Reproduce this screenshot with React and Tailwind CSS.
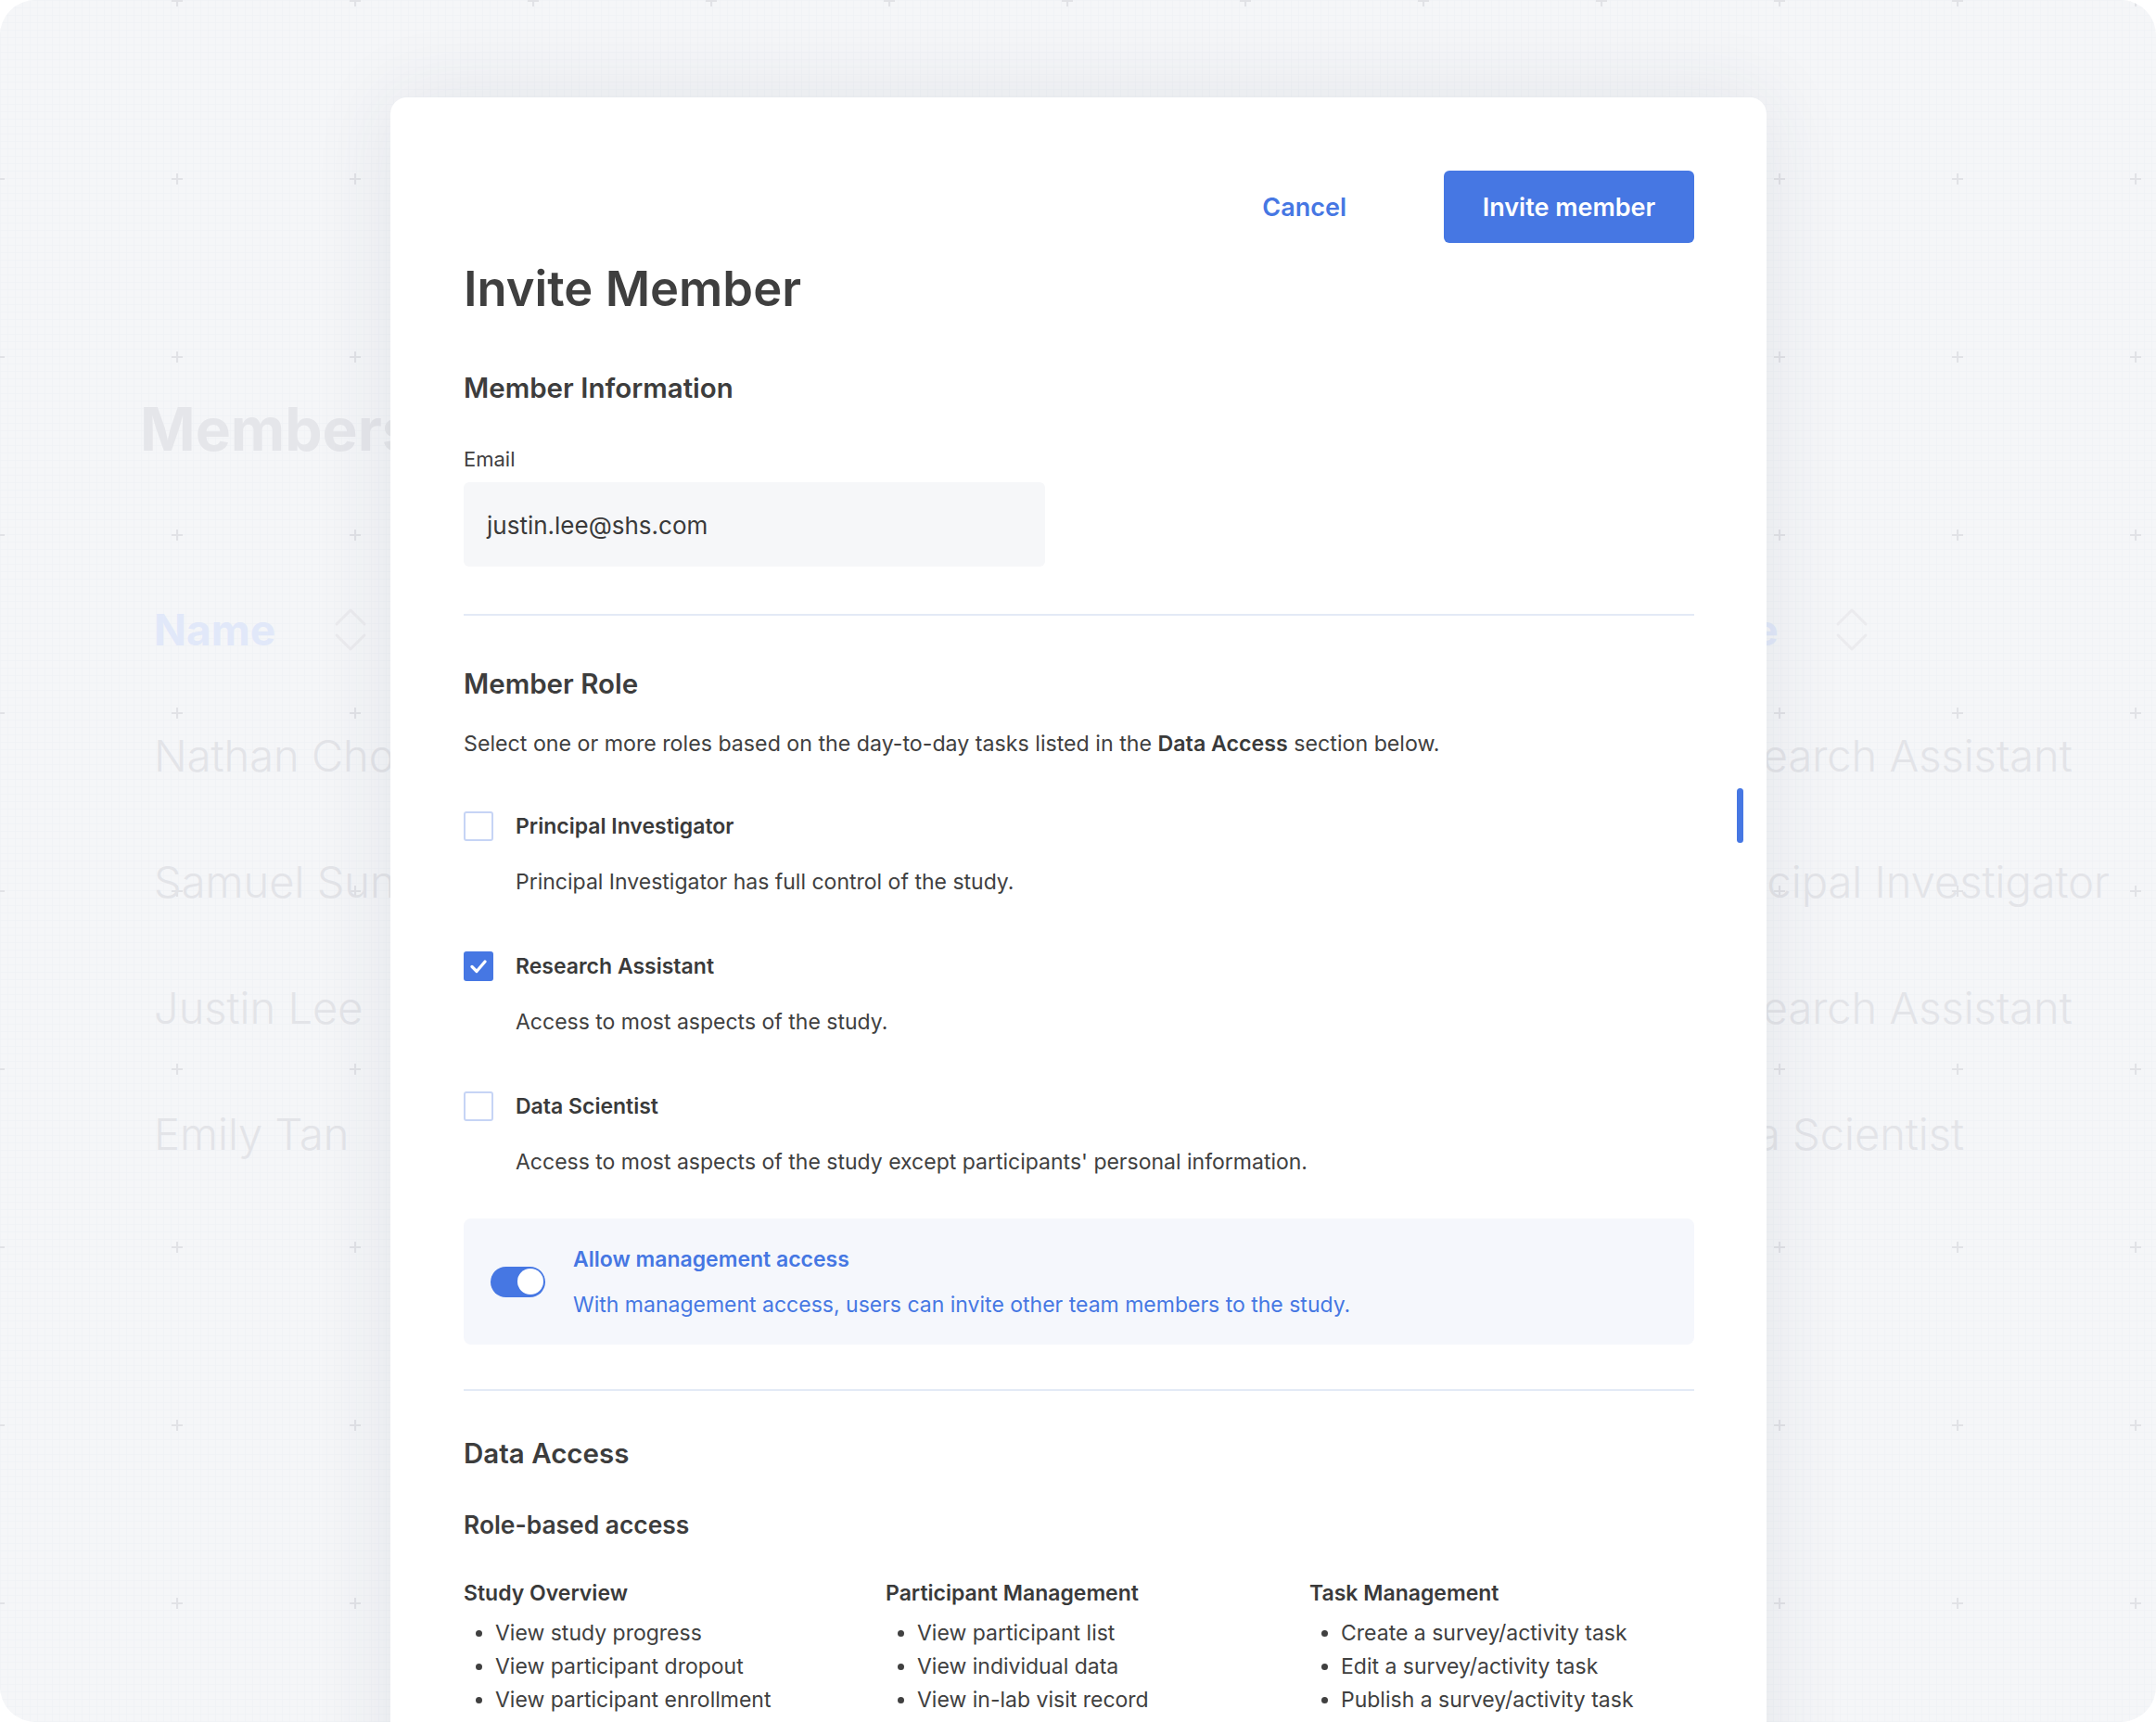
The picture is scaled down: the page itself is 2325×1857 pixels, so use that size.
import React from "react";

const roles = [
  {
    name: "Principal Investigator",
    desc: "Principal Investigator has full control of the study.",
    checked: false
  },
  {
    name: "Research Assistant",
    desc: "Access to most aspects of the study.",
    checked: true
  },
  {
    name: "Data Scientist",
    desc: "Access to most aspects of the study except participants' personal information.",
    checked: false
  }
];

const access = [
  {
    title: "Study Overview",
    items: ["View study progress", "View participant dropout", "View participant enrollment"]
  },
  {
    title: "Participant Management",
    items: ["View participant list", "View individual data", "View in-lab visit record"]
  },
  {
    title: "Task Management",
    items: ["Create a survey/activity task", "Edit a survey/activity task", "Publish a survey/activity task"]
  }
];

const members = [
  ["Nathan Cho", "Research Assistant"],
  ["Samuel Sung", "Principal Investigator"],
  ["Justin Lee", "Research Assistant"],
  ["Emily Tan", "Data Scientist"]
];

function BgGrid() {
  return (
    <svg className="absolute inset-0 w-full h-full" xmlns="http://www.w3.org/2000/svg">
      <defs>
        <pattern id="fine" width="8" height="8" patternUnits="userSpaceOnUse">
          <path d="M8 0H0V8" fill="none" stroke="#eef0f3" strokeWidth="1" />
        </pattern>
        <pattern id="plus" x="-97" y="-95" width="192" height="192" patternUnits="userSpaceOnUse">
          <path d="M90 96H102M96 90V102" stroke="#e1e2e6" strokeWidth="2" />
        </pattern>
      </defs>
      <rect width="100%" height="100%" fill="url(#fine)" />
      <rect width="100%" height="100%" fill="url(#plus)" />
    </svg>
  );
}

function SortIcon() {
  return (
    <svg width="38" height="60" viewBox="0 0 38 60" fill="none">
      <path d="M4 24L19 9L34 24" stroke="#ebebee" strokeWidth="3" strokeLinecap="round" strokeLinejoin="round" />
      <path d="M4 36L19 51L34 36" stroke="#ebebee" strokeWidth="3" strokeLinecap="round" strokeLinejoin="round" />
    </svg>
  );
}

function Checkbox({ checked }) {
  if (checked) {
    return (
      <div className="w-[32px] h-[32px] rounded-[3px] bg-[#4677e3] flex items-center justify-center">
        <svg width="22" height="22" viewBox="0 0 22 22" fill="none">
          <path d="M4 11.5L9 16.5L18 6" stroke="white" strokeWidth="3.2" strokeLinecap="round" strokeLinejoin="round" />
        </svg>
      </div>
    );
  }
  return <div className="w-[32px] h-[32px] rounded-[3px] border-2 border-[#c6d4f5] bg-white" />;
}

export default function App() {
  return (
    <div className="w-[2325px] h-[1857px] bg-white relative overflow-hidden font-['Inter',sans-serif]">
      <div className="relative w-full h-full rounded-[38px] bg-[#f5f6f8] overflow-hidden">
        <BgGrid />

        {/* page behind the dialog */}
        <div className="relative pl-[151px] pt-[431px]">
          <h1 className="text-[64px] leading-[64px] font-bold text-[#e5e6ea]">Members</h1>

          <div className="mt-[116px] pl-[15px]">
            <div className="flex h-[136px] items-center">
              <div className="w-[1654px] flex items-center">
                <span className="text-[46px] font-bold text-[#e1e8f9]">Name</span>
                <span className="ml-[62px]"><SortIcon /></span>
              </div>
              <div className="flex items-center">
                <span className="text-[46px] font-bold text-[#e1e8f9]">Role</span>
                <span className="ml-[60px]"><SortIcon /></span>
              </div>
            </div>
            {members.map((m, i) => (
              <div key={i} className="flex h-[136px] items-center text-[47px] font-light text-[#e3e4e8]">
                <div className="w-[1654px]">{m[0]}</div>
                <div>{m[1]}</div>
              </div>
            ))}
          </div>
        </div>

        {/* dialog */}
        <div className="absolute left-[421px] top-[105px] w-[1484px] h-[1900px] bg-white rounded-[18px] shadow-[0_0_90px_rgba(40,50,90,0.09)]">
          <div className="absolute right-[25px] top-[745px] w-[7px] h-[59px] rounded-full bg-[#4677e3]" />

          <div className="pl-[79px] pr-[78px] pt-[79px] text-[#3d3d3d]">
            <div className="flex justify-end items-center gap-[105px]">
              <button className="pt-[3px] text-[27px] font-semibold text-[#4677e3]">Cancel</button>
              <button className="w-[270px] h-[78px] pt-[3px] rounded-[6px] bg-[#4677e3] text-white text-[27px] font-semibold">
                Invite member
              </button>
            </div>

            <h2 className="mt-[24px] text-[52.5px] leading-[51px] font-semibold text-[#3f3f3f]">Invite Member</h2>

            <h3 className="mt-[66px] text-[29.5px] leading-[30px] font-semibold">Member Information</h3>
            <div className="mt-[51px] text-[22px] leading-[22px] text-[#404040]">Email</div>
            <div className="mt-[14px] w-[627px] h-[91px] rounded-[6px] bg-[#f6f7f9] px-[25px] pt-[2px] flex items-center text-[26px] text-[#3a3a3a]">
              justin.lee@shs.com
            </div>

            <div className="mt-[51px] h-[2px] bg-[#e3eaf6]" />

            <h3 className="mt-[58px] text-[29.5px] leading-[30px] font-semibold">Member Role</h3>
            <p className="mt-[34px] text-[23.2px] leading-[32px] text-[#404040]">
              Select one or more roles based on the day-to-day tasks listed in the{" "}
              <span className="font-semibold text-[#3a3a3a]">Data Access</span> section below.
            </p>

            <div className="mt-[57px] flex flex-col gap-[59px]">
              {roles.map((r) => (
                <div key={r.name}>
                  <div className="flex items-center h-[32px] gap-[24px]">
                    <Checkbox checked={r.checked} />
                    <span className="text-[23px] font-semibold text-[#3a3a3a]">{r.name}</span>
                  </div>
                  <p className="mt-[28px] pl-[56px] text-[23px] leading-[32px] text-[#404040]">{r.desc}</p>
                </div>
              ))}
            </div>

            <div className="mt-[45px] h-[136px] rounded-[8px] bg-[#f5f7fc] flex items-center pl-[29px] gap-[30px]">
              <div className="w-[59px] h-[33px] rounded-full bg-[#4677e3] flex items-center justify-end pr-[2.5px]">
                <div className="w-[28px] h-[28px] rounded-full bg-white" />
              </div>
              <div className="text-[#4677e3]">
                <div className="text-[23px] leading-[32px] font-semibold">Allow management access</div>
                <div className="mt-[17px] text-[23px] leading-[32px]">
                  With management access, users can invite other team members to the study.
                </div>
              </div>
            </div>

            <div className="mt-[48px] h-[2px] bg-[#e3eaf6]" />

            <h3 className="mt-[49px] text-[29.5px] leading-[36px] font-semibold">Data Access</h3>
            <h4 className="mt-[43px] text-[26.4px] leading-[32px] font-semibold">Role-based access</h4>

            <div className="mt-[42px] grid grid-cols-[455px_457px_1fr]">
              {access.map((col) => (
                <div key={col.title}>
                  <div className="text-[23px] leading-[32px] font-semibold text-[#3a3a3a]">{col.title}</div>
                  <ul className="mt-[9px]">
                    {col.items.map((it) => (
                      <li key={it} className="flex items-center h-[36px] pl-[13px] gap-[14px] text-[23px] text-[#404040]">
                        <span className="w-[7px] h-[7px] rounded-full bg-[#404040]" />
                        {it}
                      </li>
                    ))}
                  </ul>
                </div>
              ))}
            </div>
          </div>
        </div>
      </div>
    </div>
  );
}
